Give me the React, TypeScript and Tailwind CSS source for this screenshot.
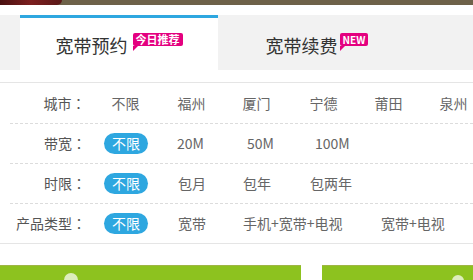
import React from 'react';

type Item = { label: string; width?: number };
type Row = { title: string; active?: boolean; items: Item[] };

const rows: Row[] = [
  {
    title: '城市',
    items: [
      { label: '不限', width: 66 },
      { label: '福州', width: 65 },
      { label: '厦门', width: 67 },
      { label: '宁德', width: 65 },
      { label: '莆田', width: 65 },
      { label: '泉州' },
    ],
  },
  {
    title: '带宽',
    active: true,
    items: [
      { label: '不限', width: 65 },
      { label: '20M', width: 70 },
      { label: '50M', width: 68 },
      { label: '100M' },
    ],
  },
  {
    title: '时限',
    active: true,
    items: [
      { label: '不限', width: 66 },
      { label: '包月', width: 65 },
      { label: '包年', width: 67 },
      { label: '包两年' },
    ],
  },
  {
    title: '产品类型',
    active: true,
    items: [
      { label: '不限', width: 66 },
      { label: '宽带', width: 65 },
      { label: '手机+宽带+电视', width: 138 },
      { label: '宽带+电视' },
    ],
  },
];

function Badge({ text, small }: { text: string; small?: boolean }) {
  return (
    <span
      className={`relative inline-block bg-[#e4007f] text-white font-bold rounded-[2px] ${
        small ? 'text-[10px] leading-[13px] px-[3px]' : 'text-[11px] leading-[13px] px-[3px]'
      }`}
    >
      {text}
      <span className="absolute left-0 top-full w-0 h-0 border-t-[5px] border-t-[#e4007f] border-r-[5px] border-r-transparent" />
    </span>
  );
}

export default function App() {
  return (
    <div className="w-[473px] h-[280px] overflow-hidden bg-white font-['Noto_Sans_CJK_SC','Microsoft_YaHei',sans-serif]">
      <div className="h-[5px] bg-[#6e6249] flex">
        <div className="w-[62px] h-full bg-gradient-to-r from-[#4a1010] via-[#7c1f1f] to-[#5a1818] rounded-br-[30px]" />
      </div>

      <div className="mt-[10px] h-[55px] bg-[#f2f2f2] flex">
        <div className="ml-[20px] w-[198px] h-full bg-white border-t-[3px] border-[#2ea7e0] flex justify-center pt-[7px]">
          <span className="text-[18px] leading-[18px] text-[#333] mt-[11px]">宽带预约</span>
          <span className="ml-[5px]">
            <Badge text="今日推荐" />
          </span>
        </div>
        <div className="w-[198px] h-full border-t-[3px] border-transparent flex justify-center pt-[7px]">
          <span className="text-[18px] leading-[18px] text-[#333] mt-[11px]">宽带续费</span>
          <span className="ml-[2px]">
            <Badge text="NEW" small />
          </span>
        </div>
      </div>

      <div className="mt-[12px] border-t border-b border-[#e5e5e5]">
        {rows.map((row, i) => (
          <div key={row.title}>
            {i > 0 && <div className="ml-[10px] border-t border-dashed border-[#dcdcdc]" />}
            <div className={`flex items-center text-[14px] ${i === 0 ? 'h-[40px]' : 'h-[39px]'}`}>
              <div className="w-[86px] text-right text-[#555]">
                {row.title}
                <span className="font-['Noto_Sans_CJK_TC',sans-serif]">：</span>
              </div>
              <div className="ml-[18px] flex items-center">
                {row.items.map((item, j) => (
                  <div
                    key={item.label}
                    className="shrink-0"
                    style={item.width ? { width: item.width } : undefined}
                  >
                    {j === 0 && row.active ? (
                      <span className="inline-block px-[8px] h-[21px] leading-[21px] rounded-full bg-[#2ea7e0] text-white">
                        {item.label}
                      </span>
                    ) : (
                      <span className="inline-block px-[8px] text-[#666]">{item.label}</span>
                    )}
                  </div>
                ))}
              </div>
            </div>
          </div>
        ))}
      </div>

      <div className="mt-[21px] flex h-[20px]">
        <div className="w-[301px] h-full bg-[#8dc21f] border-t border-[#9fb545] pl-[64px] pt-[7px]">
          <div className="w-[14px] h-[14px] rounded-full bg-white/70" />
        </div>
        <div className="ml-[21px] flex-1 h-full bg-[#8dc21f] border-t border-[#9fb545] pl-[130px] pt-[9px]">
          <div className="w-[12px] h-[12px] rounded-full bg-white/70" />
        </div>
      </div>
    </div>
  );
}
